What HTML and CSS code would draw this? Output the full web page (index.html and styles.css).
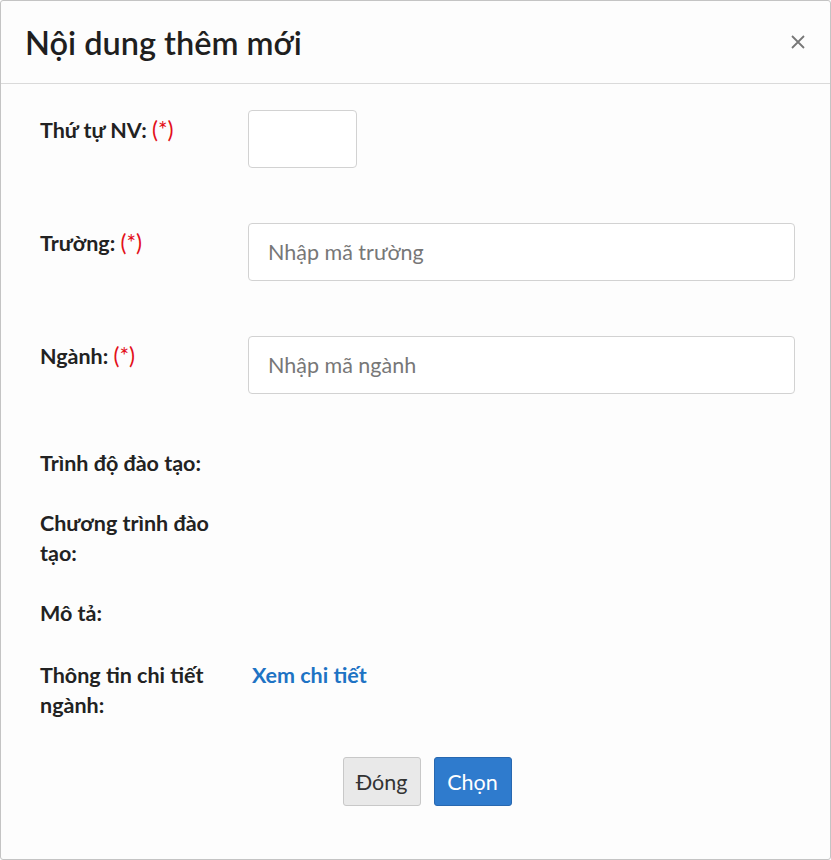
FILE: index.html
```html
<!DOCTYPE html>
<html lang="vi">
<head>
  <meta charset="UTF-8">
  <meta name="viewport" content="width=device-width, initial-scale=1.0">
  <title>Nội dung thêm mới</title>
  <link rel="stylesheet" href="styles.css">
</head>
<body>
  <div class="modal">
    <div class="modal-header">
      <h1>Nội dung thêm mới</h1>
      <button class="close" type="button" aria-label="Đóng">
        <svg width="16" height="16" viewBox="0 0 16 16"><path d="M2 2L14 14M14 2L2 14" stroke="#777" stroke-width="1.8" fill="none"/></svg>
      </button>
    </div>
    <div class="modal-body">
      <div class="row field">
        <label>Thứ tự NV: <span class="req">(*)</span></label>
        <div><input class="input small" type="text"></div>
      </div>
      <div class="row field">
        <label>Trường: <span class="req">(*)</span></label>
        <div><input class="input" type="text" placeholder="Nhập mã trường"></div>
      </div>
      <div class="row field last">
        <label>Ngành: <span class="req">(*)</span></label>
        <div><input class="input" type="text" placeholder="Nhập mã ngành"></div>
      </div>
      <div class="row text">
        <label>Trình độ đào tạo:</label>
        <div></div>
      </div>
      <div class="row text">
        <label>Chương trình đào tạo:</label>
        <div></div>
      </div>
      <div class="row text desc">
        <label>Mô tả:</label>
        <div></div>
      </div>
      <div class="row text">
        <label>Thông tin chi tiết ngành:</label>
        <div><a href="#" class="link">Xem chi tiết</a></div>
      </div>
    </div>
    <div class="modal-footer">
      <button class="btn" type="button">Đóng</button>
      <button class="btn primary" type="button">Chọn</button>
    </div>
  </div>
</body>
</html>
```

FILE: styles.css
```css
html, body {
  margin: 0;
  background: #fff;
}
body {
  font-family: Lato, "Noto Sans", sans-serif;
  color: #222;
}
.modal {
  box-sizing: border-box;
  width: 831px;
  height: 860px;
  border: 1px solid #c4c4c4;
  border-radius: 3px;
  background: #fdfdfd;
}
.modal-header {
  height: 82px;
  border-bottom: 1px solid #dadada;
  display: flex;
  align-items: center;
  justify-content: space-between;
  padding: 0 22px 0 24px;
}
.modal-header h1 {
  margin: 0;
  font-size: 32.5px;
  font-weight: 600;
  color: #1f1f1f;
}
.close {
  border: 0;
  background: none;
  padding: 0;
  width: 20px;
  height: 20px;
  display: flex;
  align-items: center;
  justify-content: center;
}
.modal-body {
  padding: 26px 35px 0 39px;
}
.row {
  display: grid;
  grid-template-columns: 208px 547px;
}
.row label {
  font-size: 21.5px;
  font-weight: 700;
  line-height: 30px;
  padding-right: 20px;
}
.row.field {
  margin-bottom: 55px;
}
.row.field label {
  padding-top: 5px;
}
.row.field.last {
  margin-bottom: 54px;
}
.row.text {
  margin-bottom: 30px;
}
.row.text.desc {
  margin-bottom: 32px;
}
.req {
  color: #e3101a;
  font-weight: 400;
  font-size: 22.5px;
}
.input {
  box-sizing: border-box;
  width: 100%;
  height: 58px;
  border: 1px solid #d2d2d2;
  border-radius: 4px;
  background: #fff;
  padding: 0 19px;
  font-family: inherit;
  font-size: 21.5px;
  color: #333;
}
.input.small {
  width: 109px;
}
.input::placeholder {
  color: #777;
}
.link {
  display: inline-block;
  padding-left: 4px;
  font-size: 21.5px;
  font-weight: 700;
  line-height: 30px;
  color: #1e73c4;
  text-decoration: none;
}
.modal-footer {
  display: flex;
  justify-content: center;
  gap: 13px;
  padding: 7px 0 0 23px;
}
.btn {
  width: 78px;
  height: 49px;
  border: 1px solid #c8c8c8;
  border-radius: 3px;
  background: #e9e9e9;
  font-family: inherit;
  font-size: 21.5px;
  color: #333;
}
.btn.primary {
  background: #2f7bcd;
  border-color: #2868b0;
  color: #fff;
}
```
